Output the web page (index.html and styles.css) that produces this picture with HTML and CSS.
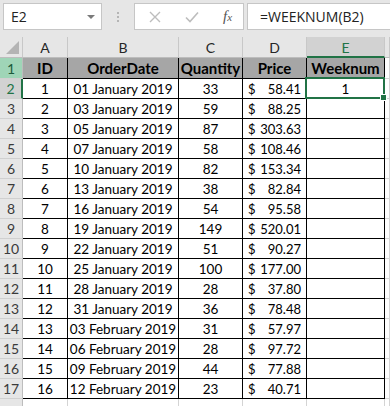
FILE: index.html
```html
<!DOCTYPE html>
<html lang="en">
<head>
    <meta charset="UTF-8">
    <meta name="viewport" content="width=device-width, initial-scale=1.0">
    <title>Weeknum</title>
    <link rel="stylesheet" href="styles.css">
</head>
<body>
    <div class="formula-bar">
        <div class="name-box">
            <span>E2</span>
            <span class="caret"></span>
        </div>
        <div class="grip">
            <span></span><span></span><span></span>
        </div>
        <div class="buttons">
            <svg class="btn-icon" width="12" height="12" viewBox="0 0 12 12"><path d="M1 1 L11 11 M11 1 L1 11" stroke="#bdbdbd" stroke-width="1.4" fill="none"/></svg>
            <svg class="btn-icon" width="14" height="12" viewBox="0 0 14 12"><path d="M1 6.5 L5 10.5 L13 1.5" stroke="#bdbdbd" stroke-width="1.6" fill="none"/></svg>
            <span class="fx">f<small>x</small></span>
        </div>
        <div class="formula">=WEEKNUM(B2)</div>
    </div>

    <div class="sheet">
        <div class="row col-head">
            <div class="corner"><span class="tri"></span></div>
            <div>A</div>
            <div>B</div>
            <div>C</div>
            <div>D</div>
            <div class="active">E</div>
            <div></div>
        </div>
        <div class="row row-1">
            <div class="rh hl">1</div>
            <div class="cell th">ID</div>
            <div class="cell th">OrderDate</div>
            <div class="cell th">Quantity</div>
            <div class="cell th">Price</div>
            <div class="cell th">Weeknum</div>
            <div class="blank"></div>
        </div>
        <div id="rows"></div>
        <div class="row">
            <div class="rh"></div>
            <div class="blank"></div>
            <div class="blank"></div>
            <div class="blank"></div>
            <div class="blank"></div>
            <div class="blank"></div>
            <div class="blank"></div>
        </div>
    </div>

    <script>
        const data = [
            [1, '01 January 2019', 33, '58.41'],
            [2, '03 January 2019', 59, '88.25'],
            [3, '05 January 2019', 87, '303.63'],
            [4, '07 January 2019', 58, '108.46'],
            [5, '10 January 2019', 82, '153.34'],
            [6, '13 January 2019', 38, '82.84'],
            [7, '16 January 2019', 54, '95.58'],
            [8, '19 January 2019', 149, '520.01'],
            [9, '22 January 2019', 51, '90.27'],
            [10, '25 January 2019', 100, '177.00'],
            [11, '28 January 2019', 28, '37.80'],
            [12, '31 January 2019', 36, '78.48'],
            [13, '03 February 2019', 31, '57.97'],
            [14, '06 February 2019', 28, '97.72'],
            [15, '09 February 2019', 44, '77.88'],
            [16, '12 February 2019', 23, '40.71']
        ];
        let html = '';
        data.forEach(function (r, i) {
            const first = i === 0;
            html += '<div class="row">'
                + '<div class="rh' + (first ? ' sel' : '') + '">' + (i + 2) + '</div>'
                + '<div class="cell">' + r[0] + '</div>'
                + '<div class="cell">' + r[1] + '</div>'
                + '<div class="cell">' + r[2] + '</div>'
                + '<div class="cell money"><span>$</span><span>' + r[3] + '</span></div>'
                + '<div class="cell' + (first ? ' current' : '') + '">' + (first ? '1<i class="handle"></i>' : '') + '</div>'
                + '<div class="blank"></div>'
                + '</div>';
        });
        document.getElementById('rows').innerHTML = html;
    </script>
</body>
</html>
```

FILE: styles.css
```css
body {
    margin: 0;
    width: 390px;
    height: 406px;
    overflow: hidden;
    background-color: #fff;
    font-family: 'Lato', 'Liberation Sans', sans-serif;
}
.formula-bar {
    display: flex;
    align-items: flex-start;
    height: 37px;
    padding: 3px 0 0 3px;
    box-sizing: border-box;
    background-color: #e6e6e6;
    font-family: 'Open Sans', 'Noto Sans', sans-serif;
    font-size: 14px;
    color: #222;
}
.name-box {
    display: flex;
    align-items: center;
    justify-content: space-between;
    width: 99px;
    height: 27px;
    padding: 0 6px 0 7px;
    box-sizing: border-box;
    background-color: #fff;
    border: 1px solid #c6c6c6;
}
.caret {
    width: 0;
    height: 0;
    border-left: 4px solid transparent;
    border-right: 4px solid transparent;
    border-top: 4px solid #7a7a7a;
}
.grip {
    display: flex;
    flex-direction: column;
    gap: 2px;
    width: 32px;
    align-items: center;
    padding-top: 9px;
}
.grip span {
    width: 2px;
    height: 2px;
    background-color: #b5b5b5;
}
.buttons {
    display: flex;
    align-items: center;
    width: 110px;
    height: 27px;
    padding-left: 14px;
    gap: 24px;
    box-sizing: border-box;
    background-color: #fff;
    border: 1px solid #c6c6c6;
}
.fx {
    font-family: 'Liberation Serif', serif;
    font-style: italic;
    font-size: 15px;
    color: #555;
}
.fx small {
    font-size: 11px;
}
.formula {
    flex: 1;
    height: 27px;
    margin-left: 3px;
    padding-left: 12px;
    line-height: 26px;
    box-sizing: border-box;
    background-color: #fff;
    border: 1px solid #c6c6c6;
    border-right: none;
}
.sheet {
    font-size: 13.5px;
    color: #000;
}
.row {
    display: grid;
    grid-template-columns: 23px 45px 111px 64px 64px 78px 1fr;
    height: 20px;
}
.row > div {
    box-sizing: border-box;
    border-right: 1px solid #d4d4d4;
    border-bottom: 1px solid #d4d4d4;
    display: flex;
    align-items: center;
    justify-content: center;
    white-space: nowrap;
    overflow: hidden;
}
.col-head {
    height: 21px;
}
.col-head > div {
    background-color: #e6e6e6;
    border-right-color: #c8c8c8;
    border-bottom-color: #bdbdbd;
    color: #262626;
    font-size: 14px;
    padding-top: 1px;
}
.col-head .active {
    background-color: #d2d2d2;
    color: #217346;
    border-bottom: 2px solid #217346;
}
.corner {
    position: relative;
}
.tri {
    position: absolute;
    right: 3px;
    bottom: 3px;
    width: 0;
    height: 0;
    border-left: 13px solid transparent;
    border-bottom: 13px solid #b4b4b4;
}
.row-1 {
    height: 21px;
}
.rh {
    background-color: #e6e6e6;
    color: #3a3a3a;
}
.row > .rh {
    font-size: 14px;
    border-right-color: #bdbdbd;
    border-bottom-color: #d0d0d0;
}
.row > .rh.hl {
    background-color: #9fd5b7;
    color: #1d5b3a;
}
.row > .rh.sel {
    background-color: #d2d2d2;
    color: #217346;
    border-right: 2px solid #217346;
}
.row > .cell {
    border-right-color: #000;
    border-bottom-color: #000;
}
.row > .th {
    background-color: #a6a6a6;
    font-weight: bold;
    font-size: 15px;
}
.row > .money {
    justify-content: space-between;
    padding: 0 5px;
    font-size: 13px;
}
.current {
    position: relative;
    overflow: visible !important;
}
.current::after {
    content: '';
    position: absolute;
    left: -2px;
    top: -2px;
    right: -1px;
    bottom: -1px;
    border: 2px solid #217346;
}
.handle {
    position: absolute;
    right: -3px;
    bottom: -3px;
    width: 5px;
    height: 5px;
    background-color: #217346;
    border: 1px solid #fff;
    z-index: 2;
}
```
